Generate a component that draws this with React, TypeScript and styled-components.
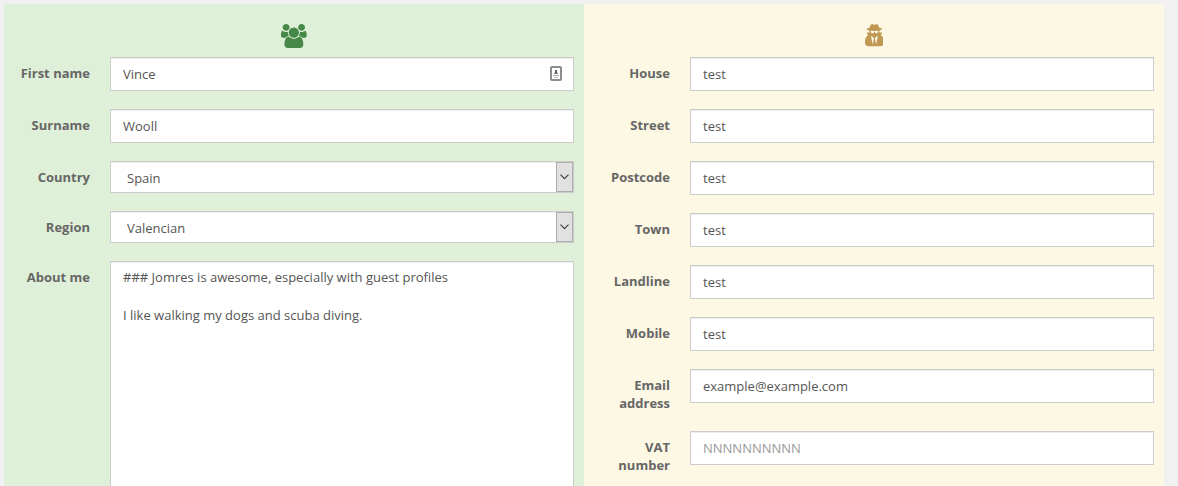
import React from 'react';
import styled, { createGlobalStyle, css } from 'styled-components';

const GlobalStyle = createGlobalStyle`
  *, *::before, *::after { box-sizing: border-box; }
  body {
    margin: 0;
    background: #f1f1f1;
    color: #666;
    font-family: 'Open Sans', 'Helvetica Neue', Arial, sans-serif;
    font-size: 13px;
    line-height: 19px;
  }
`;

const ProfileForm = styled.form`
  display: grid;
  grid-template-columns: 1fr 1fr;
  padding: 4px 14px 14px 4px;
`;

const Panel = styled.section<{ $tone: 'guest' | 'private' }>`
  padding: 20px 10px 0;
  ${({ $tone }) =>
    $tone === 'guest'
      ? css`
          background: #dff0d8;
          color: #468847;
        `
      : css`
          background: #fcf8e3;
          color: #c09853;
        `}
`;

const PanelIcon = styled.div`
  display: flex;
  justify-content: center;
  height: 33px;

  svg {
    height: 24px;
    fill: currentColor;
  }
`;

const Row = styled.div`
  display: grid;
  grid-template-columns: 76px 1fr;
  column-gap: 20px;
  align-items: start;
  margin-bottom: 18px;
`;

const Label = styled.label`
  padding: 7px 0 1px;
  color: #666;
  font-weight: 700;
  line-height: 18px;
  text-align: right;
`;

const controlStyle = css`
  display: block;
  width: 100%;
  margin: 0;
  border: 1px solid #ccc;
  border-radius: 0;
  background: #fff;
  box-shadow: inset 0 1px 1px rgba(0, 0, 0, 0.075);
  color: #555;
  font: inherit;
  outline: none;
`;

const TextInput = styled.input`
  ${controlStyle}
  height: 34px;
  padding: 6px 12px;

  &::placeholder {
    color: #999;
    opacity: 1;
  }
`;

const Select = styled.select`
  ${controlStyle}
  height: 32px;
  padding: 2px 28px 0 16px;
  appearance: none;
`;

const TextArea = styled.textarea`
  ${controlStyle}
  padding: 6px 12px;
  resize: none;
`;

const ControlWrap = styled.div`
  position: relative;
`;

const ContactBadge = styled.svg`
  position: absolute;
  top: 9px;
  right: 12px;
  width: 12px;
  height: 16px;
`;

const SelectArrow = styled.span`
  position: absolute;
  top: 1px;
  right: 1px;
  bottom: 1px;
  width: 17px;
  display: flex;
  align-items: center;
  justify-content: center;
  border: 1px solid #adadad;
  background: #e1e1e1;
  pointer-events: none;
`;

const UsersIcon = () => (
  <svg viewBox="0 0 1920 1792" aria-hidden="true">
    <path d="M593 896q-162 5-265 128H194q-82 0-138-40.5T0 865q0-353 124-353 6 0 43.5 21t97.5 42.5T384 597q67 0 133-23-5 37-5 66 0 139 81 256zm1071 637q0 120-73 189.5t-194 69.5H523q-121 0-194-69.5T256 1533q0-53 3.5-103.5t14-109T300 1212t43-97.5 62-81 85.5-53.5T602 960q10 0 43 21.5t73 48 107 48 135 21.5 135-21.5 107-48 73-48 43-21.5q61 0 111.5 20t85.5 53.5 62 81 43 97.5 26.5 108.5 14 109 3.5 103.5zM640 256q0 106-75 181t-181 75-181-75-75-181 75-181T384 0t181 75 75 181zm704 384q0 159-112.5 271.5T960 1024 688.5 911.5 576 640t112.5-271.5T960 256t271.5 112.5T1344 640zm576 225q0 78-56 118.5t-138 40.5h-134q-103-123-265-128 81-117 81-256 0-29-5-66 66 23 133 23 59 0 119-21.5t97.5-42.5 43.5-21q124 0 124 353zm-128-609q0 106-75 181t-181 75-181-75-75-181 75-181 181-75 181 75 75 181z" />
  </svg>
);

const SecretIcon = () => (
  <svg viewBox="0 0 1408 1792" aria-hidden="true">
    <path d="M576 1536l96-448-96-128-128-64 128 640zm256 0l128-640-128 64-96 128zm160-1010q-2-4-4-6-10-8-96-8-70 0-167 19-7 2-21 2t-21-2q-97-19-167-19-86 0-96 8-2 2-4 6 2 18 4 27 2 3 7.5 6.5T435 570q2 4 7.5 20.5t7 20.5 7.5 17 8.5 17 9 14 12 13.5 14 9.5 17.5 8 20.5 4 24.5 2q36 0 59-12.5t32.5-30 14.5-34.5 11.5-29.5T698 577h12q11 0 17.5 12.5T739 619t14.5 34.5 32.5 30 59 12.5q13 0 24.5-2t20.5-4 17.5-8 14-9.5 12-13.5 9-14 8.5-17 7.5-17 7-20.5T973 570q2-7 7.5-10.5T988 553q2-9 4-27zm416 879q0 121-73 190t-194 69H267q-121 0-194-69T0 1405q0-61 4.5-118t19-125.5T61 1038t63.5-103.5T218 860l-90-220h214q-22-64-22-128 0-12 2-32-194-40-194-96 0-57 210-99 17-62 51.5-134T459 35q32-37 76-37 30 0 84 31t84 31 84-31 84-31q44 0 76 37 36 42 70 114t51 134q210 42 210 99 0 56-194 96 7 81-20 160h214l-82 225q63 33 107.5 96.5t65.5 143.5 29 151.5 8 148.5z" />
  </svg>
);

const addressFields = [
  { id: 'house', label: 'House', value: 'test' },
  { id: 'street', label: 'Street', value: 'test' },
  { id: 'postcode', label: 'Postcode', value: 'test' },
  { id: 'town', label: 'Town', value: 'test' },
  { id: 'landline', label: 'Landline', value: 'test' },
  { id: 'mobile', label: 'Mobile', value: 'test' },
  { id: 'email', label: 'Email address', value: 'example@example.com' },
  { id: 'vat', label: 'VAT number', value: '', placeholder: 'NNNNNNNNNN' },
];

const about =
  '### Jomres is awesome, especially with guest profiles\n\nI like walking my dogs and scuba diving.';

function SelectRow({ id, label, value }: { id: string; label: string; value: string }) {
  return (
    <Row>
      <Label htmlFor={id}>{label}</Label>
      <ControlWrap>
        <Select id={id} defaultValue={value}>
          <option>{value}</option>
        </Select>
        <SelectArrow aria-hidden="true">
          <svg width="9" height="6" viewBox="0 0 9 6" fill="none" stroke="#444" strokeWidth="1.2">
            <path d="M0.5 0.7L4.5 4.7L8.5 0.7" />
          </svg>
        </SelectArrow>
      </ControlWrap>
    </Row>
  );
}

export default function App() {
  return (
    <>
      <GlobalStyle />
      <ProfileForm>
        <Panel $tone="guest">
          <PanelIcon>
            <UsersIcon />
          </PanelIcon>
          <Row>
            <Label htmlFor="firstname">First name</Label>
            <ControlWrap>
              <TextInput id="firstname" defaultValue="Vince" />
              <ContactBadge viewBox="0 0 12 16" aria-hidden="true">
                <rect x="1" y="1" width="10" height="13" rx="1" fill="#fff" stroke="#8c8c8c" strokeWidth="2" />
                <path d="M5 4h2v2l1 2H4l1-2z" fill="#666" />
                <path d="M3 9h6v1H3z" fill="#aaa" />
                <path d="M4 11h4v1H4z" fill="#bbb" />
              </ContactBadge>
            </ControlWrap>
          </Row>
          <Row>
            <Label htmlFor="surname">Surname</Label>
            <TextInput id="surname" defaultValue="Wooll" />
          </Row>
          <SelectRow id="country" label="Country" value="Spain" />
          <SelectRow id="region" label="Region" value="Valencian" />
          <Row>
            <Label htmlFor="about">About me</Label>
            <TextArea id="about" rows={14} defaultValue={about} />
          </Row>
        </Panel>
        <Panel $tone="private">
          <PanelIcon>
            <SecretIcon />
          </PanelIcon>
          {addressFields.map((field) => (
            <Row key={field.id}>
              <Label htmlFor={field.id}>{field.label}</Label>
              <TextInput id={field.id} defaultValue={field.value} placeholder={field.placeholder} />
            </Row>
          ))}
        </Panel>
      </ProfileForm>
    </>
  );
}
